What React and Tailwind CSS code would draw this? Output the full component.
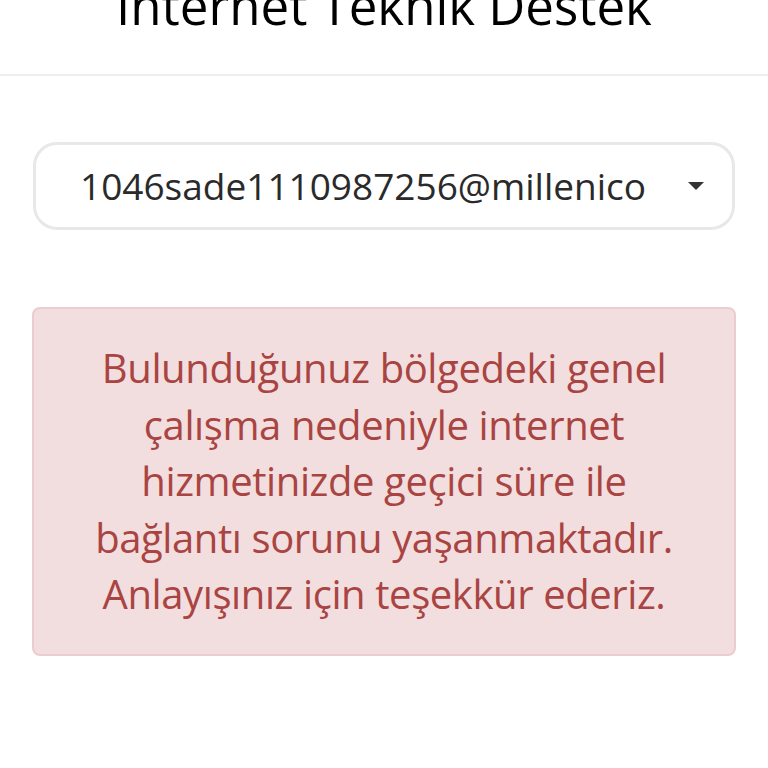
import React from 'react';

const App = () => {
    return (
        <div className="min-h-screen bg-white" style={{ fontFamily: '"Open Sans", "Noto Sans", sans-serif' }}>
            <div className="h-[76px] border-b-2 border-[#eeeeee] overflow-hidden">
                <h1 className="text-center text-[51px] leading-[60px] -mt-[25px] text-black">
                    Internet Teknik Destek
                </h1>
            </div>

            <div className="px-[33px] pt-[66px]">
                <div className="relative h-[88px] rounded-[24px] border-[3px] border-[#e8e8e8] bg-white flex items-center">
                    <div className="ml-[44px] mr-[86px] flex-1 overflow-hidden whitespace-nowrap">
                        <span className="text-[37px] text-[#2a2a2a]">1046sade1110987256@millenicom.com.tr</span>
                    </div>
                    <div className="absolute right-[28px] top-1/2 -translate-y-1/2 w-0 h-0 border-l-[8px] border-r-[8px] border-t-[8px] border-l-transparent border-r-transparent border-t-[#333333]"></div>
                </div>
            </div>

            <div className="px-[32px] pt-[77px]">
                <div className="rounded-[8px] border-2 border-[#ebccd1] bg-[#f2dede] px-[33px] py-[31px] text-center text-[40px] leading-[56.5px] tracking-[-0.4px] text-[#a94442]">
                    Bulunduğunuz bölgedeki genel çalışma nedeniyle internet hizmetinizde geçici süre ile bağlantı sorunu yaşanmaktadır. Anlayışınız için teşekkür ederiz.
                </div>
            </div>
        </div>
    );
};

export default App;
